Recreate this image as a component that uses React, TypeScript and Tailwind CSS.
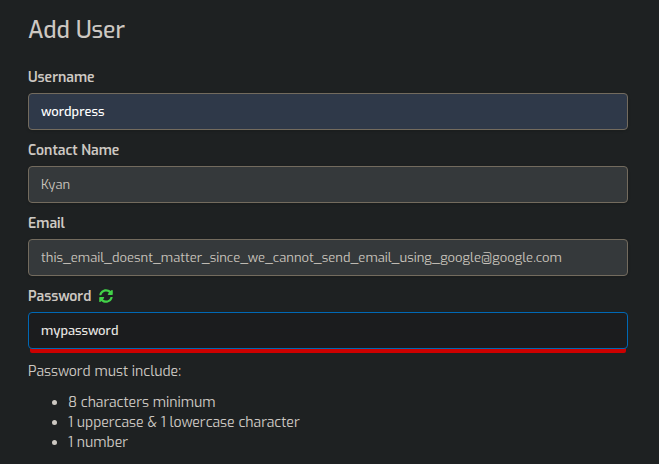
import { useState } from "react";
import type { ReactNode } from "react";
import { FaSyncAlt } from "react-icons/fa";

type FieldProps = {
  id: string;
  label: string;
  initial: string;
  tone: string;
  action?: ReactNode;
};

function Field({ id, label, initial, tone, action }: FieldProps) {
  const [value, setValue] = useState(initial);
  return (
    <div className="flex flex-col gap-1">
      <div className="flex h-6 items-center gap-2">
        <label htmlFor={id} className="pt-0.5 text-sm leading-5 font-semibold">
          {label}
        </label>
        {action}
      </div>
      <input
        id={id}
        type="text"
        value={value}
        onChange={(e) => setValue(e.target.value)}
        className={`h-[37px] w-full rounded border px-3 text-[13px] outline-none ${tone}`}
      />
    </div>
  );
}

const rules = ["8 characters minimum", "1 uppercase & 1 lowercase character", "1 number"];
const plain = "border-[#736b5e] bg-[#35393b] text-[#c8c3bc] shadow-sm";

export default function App() {
  return (
    <main className="min-h-screen bg-[#1e2122] pt-3 pr-[31px] pb-3 pl-7 font-['Exo','Exo_2','Roboto',sans-serif] text-sm text-[#cdc8c2]">
      <h1 className="text-[23px] leading-[38px] font-medium">Add User</h1>
      <form className="mt-[15px] flex flex-col gap-2" onSubmit={(e) => e.preventDefault()}>
        <Field
          id="username"
          label="Username"
          initial="wordpress"
          tone="border-[#736b5e] bg-[#2f3949] font-medium text-white shadow-sm"
        />
        <Field id="contact" label="Contact Name" initial="Kyan" tone={plain} />
        <Field
          id="email"
          label="Email"
          initial="this_email_doesnt_matter_since_we_cannot_send_email_using_google@google.com"
          tone={plain}
        />
        <Field
          id="password"
          label="Password"
          initial="mypassword"
          tone="border-[#0068b5] bg-[#1b1c1e] font-medium text-[#e8e6e3] shadow-[0_6px_0_-2px_#cc0000]"
          action={
            <button type="button" aria-label="Generate password" className="text-[#42d248]">
              <FaSyncAlt size={14} />
            </button>
          }
        />
      </form>
      <p className="mt-[13px] leading-5">Password must include:</p>
      <ul className="mt-[11px] list-disc pl-10 leading-5">
        {rules.map((rule) => (
          <li key={rule}>{rule}</li>
        ))}
      </ul>
    </main>
  );
}
